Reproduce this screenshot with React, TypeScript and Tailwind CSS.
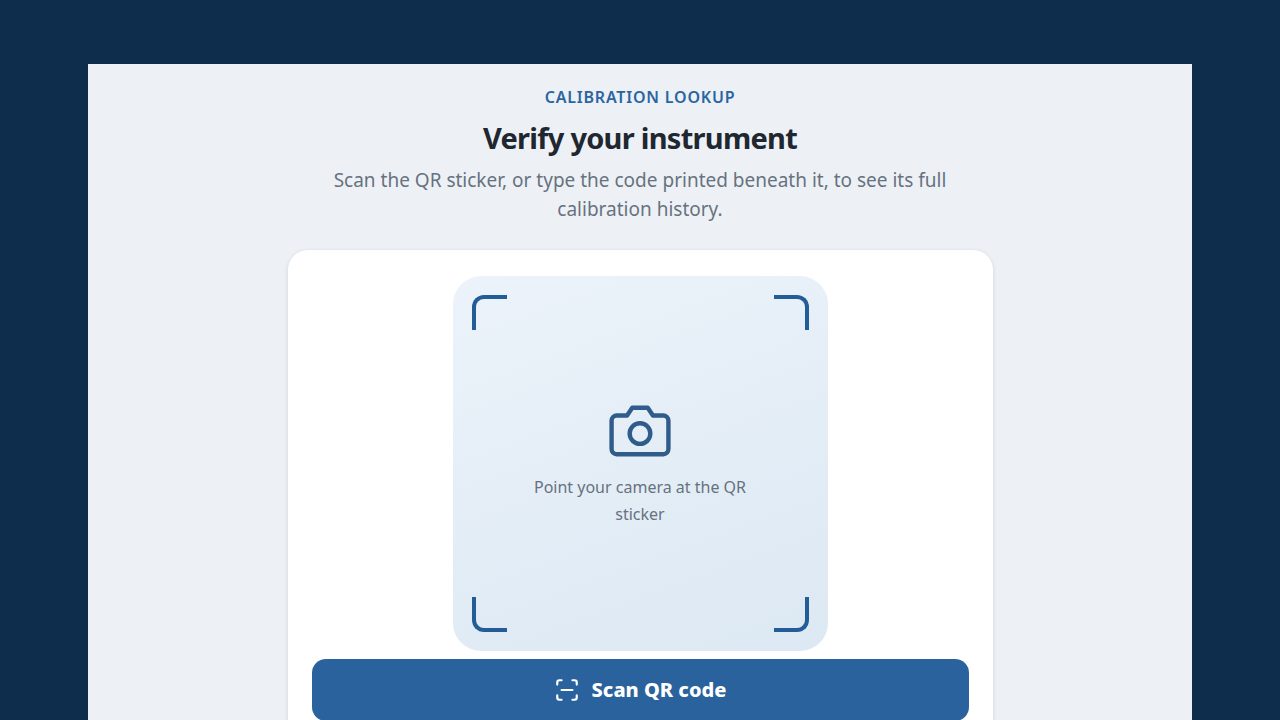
import React from 'react';
import { ScanLine } from 'lucide-react';

const corners = [
  'left-[19px] top-[19px] border-l-4 border-t-4 rounded-tl-xl',
  'right-[19px] top-[19px] border-r-4 border-t-4 rounded-tr-xl',
  'left-[19px] bottom-[19px] border-l-4 border-b-4 rounded-bl-xl',
  'right-[19px] bottom-[19px] border-r-4 border-b-4 rounded-br-xl',
];

const CameraIcon: React.FC = () => (
  <svg
    viewBox="0 0 24 24"
    className="size-[62px] text-[#2f5c8a]"
    fill="none"
    stroke="currentColor"
    strokeWidth="1.7"
    strokeLinecap="round"
    strokeLinejoin="round"
    aria-hidden="true"
  >
    <path d="M23 19a2 2 0 0 1-2 2H3a2 2 0 0 1-2-2V8a2 2 0 0 1 2-2h4l2-3h6l2 3h4a2 2 0 0 1 2 2z" />
    <circle cx="12" cy="13" r="4" />
  </svg>
);

const Viewfinder: React.FC = () => (
  <div className="relative mx-auto flex aspect-square w-full max-w-[375px] flex-col items-center justify-center gap-3 rounded-[28px] bg-linear-160 from-[#ecf3fa] to-[#dce8f3] px-16">
    {corners.map(c => (
      <span key={c} className={`absolute size-[35px] border-[#235d98] ${c}`} />
    ))}
    <CameraIcon />
    <p className="text-center text-base leading-[27px] text-[#67727f]">Point your camera at the QR sticker</p>
  </div>
);

export default function App() {
  return (
    <div className="min-h-screen bg-[#0e2d4c] px-[88px] pt-16 font-['Noto_Sans','Open_Sans',sans-serif]">
      <main className="min-h-[calc(100vh-64px)] bg-[#edf1f6] pt-5 pb-8">
        <div className="mx-auto max-w-[705px]">
          <header className="text-center">
            <p className="text-base leading-[26px] font-semibold tracking-wider text-[#2b65a1] uppercase">Calibration lookup</p>
            <h1 className="mt-2 text-[29px] leading-10 font-bold tracking-tight text-[#1f2730]">Verify your instrument</h1>
            <p className="mt-2 text-[19px] leading-[29px] text-[#67727f]">
              Scan the QR sticker, or type the code printed beneath it, to see its full calibration history.
            </p>
          </header>

          <section className="mt-[26px] rounded-[20px] bg-white px-6 pt-[26px] pb-6 shadow-[0_1px_4px_rgba(20,50,90,0.14)]">
            <Viewfinder />
            <button
              type="button"
              className="mt-2 flex h-[62px] w-full items-center justify-center gap-3 rounded-[14px] bg-[#2a629d] text-xl font-extrabold text-white"
            >
              <ScanLine size={26} />
              Scan QR code
            </button>
          </section>
        </div>
      </main>
    </div>
  );
}
